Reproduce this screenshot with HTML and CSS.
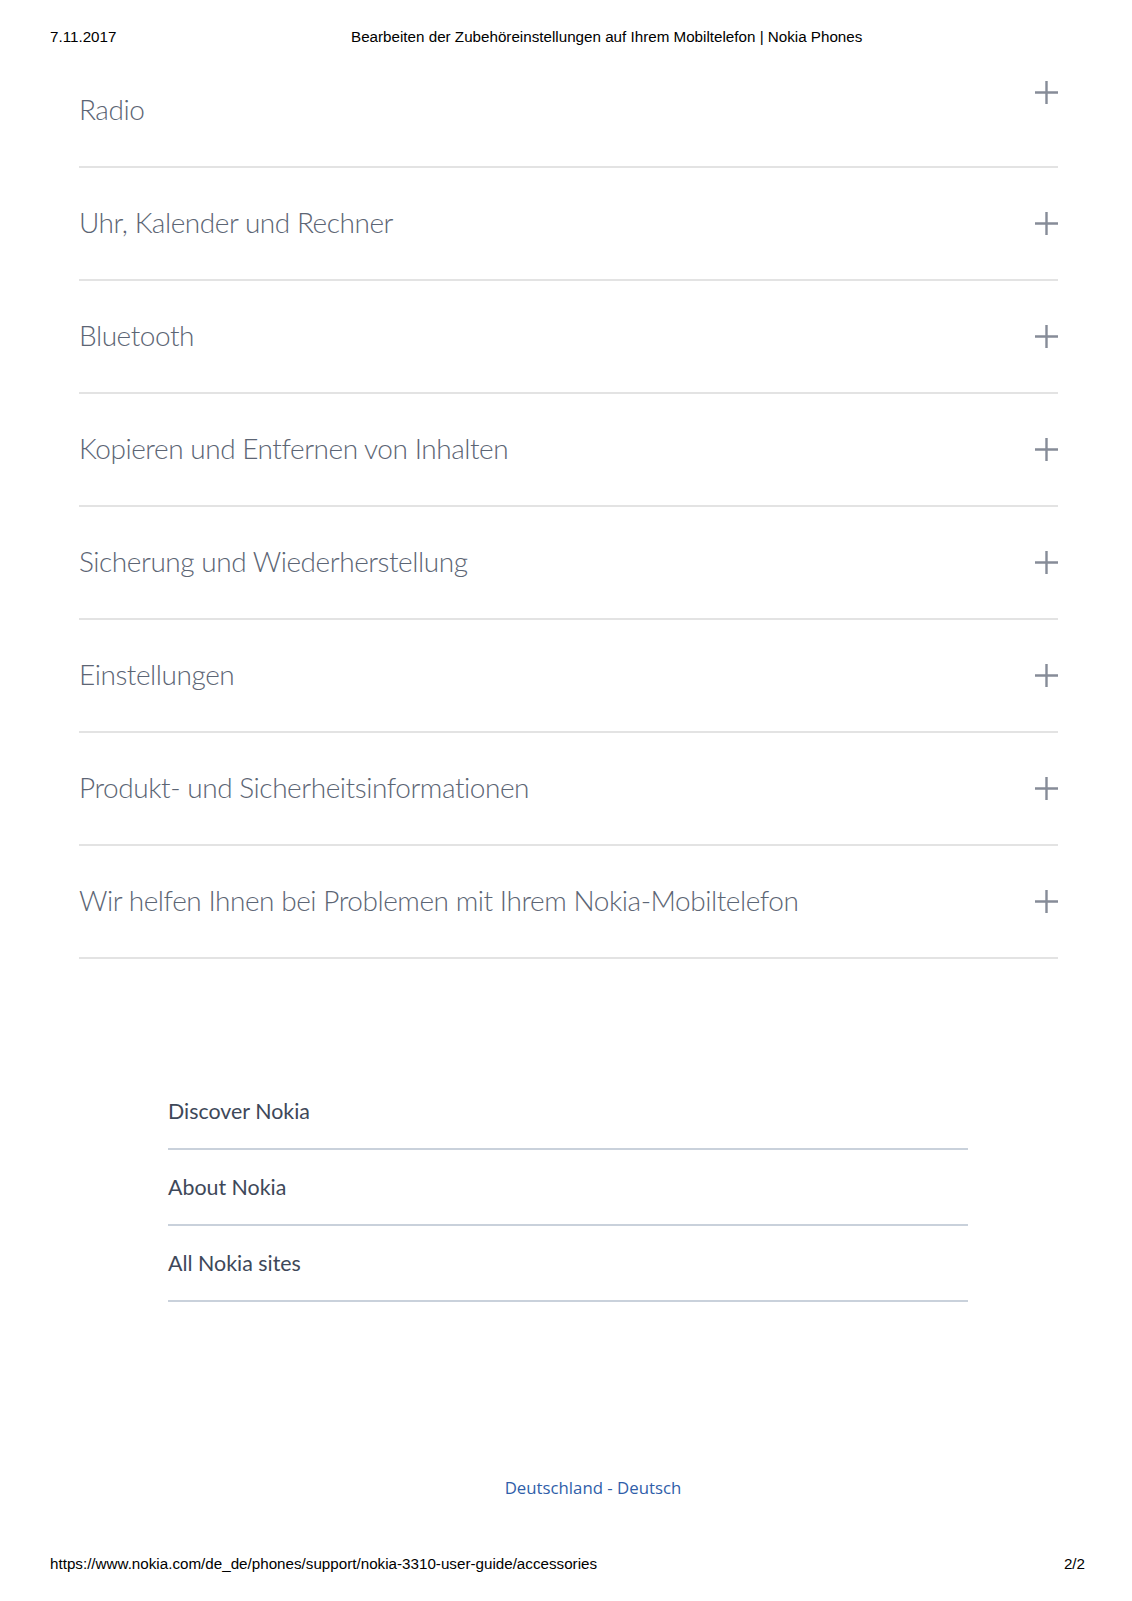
FILE: index.html
```html
<!DOCTYPE html>
<html lang="de">
<head>
<meta charset="utf-8">
<title>Bearbeiten der Zubehöreinstellungen auf Ihrem Mobiltelefon | Nokia Phones</title>
<link rel="stylesheet" href="styles.css">
</head>
<body>
<div class="page">
  <header class="print-head">
    <span class="print-date">7.11.2017</span>
    <span class="print-title">Bearbeiten der Zubehöreinstellungen auf Ihrem Mobiltelefon | Nokia Phones</span>
  </header>

  <main class="accordion">
    <div class="acc-row acc-row-first">
      <span class="acc-label">Radio</span>
      <svg class="plus" viewBox="0 0 23 23"><path d="M11.5 0V23M0 11.5H23"/></svg>
    </div>
    <div class="acc-row">
      <span class="acc-label">Uhr, Kalender und Rechner</span>
      <svg class="plus" viewBox="0 0 23 23"><path d="M11.5 0V23M0 11.5H23"/></svg>
    </div>
    <div class="acc-row">
      <span class="acc-label">Bluetooth</span>
      <svg class="plus" viewBox="0 0 23 23"><path d="M11.5 0V23M0 11.5H23"/></svg>
    </div>
    <div class="acc-row">
      <span class="acc-label">Kopieren und Entfernen von Inhalten</span>
      <svg class="plus" viewBox="0 0 23 23"><path d="M11.5 0V23M0 11.5H23"/></svg>
    </div>
    <div class="acc-row">
      <span class="acc-label">Sicherung und Wiederherstellung</span>
      <svg class="plus" viewBox="0 0 23 23"><path d="M11.5 0V23M0 11.5H23"/></svg>
    </div>
    <div class="acc-row">
      <span class="acc-label">Einstellungen</span>
      <svg class="plus" viewBox="0 0 23 23"><path d="M11.5 0V23M0 11.5H23"/></svg>
    </div>
    <div class="acc-row">
      <span class="acc-label">Produkt- und Sicherheitsinformationen</span>
      <svg class="plus" viewBox="0 0 23 23"><path d="M11.5 0V23M0 11.5H23"/></svg>
    </div>
    <div class="acc-row">
      <span class="acc-label">Wir helfen Ihnen bei Problemen mit Ihrem Nokia-Mobiltelefon</span>
      <svg class="plus" viewBox="0 0 23 23"><path d="M11.5 0V23M0 11.5H23"/></svg>
    </div>
  </main>

  <nav class="site-links">
    <a class="site-link">Discover Nokia</a>
    <a class="site-link">About Nokia</a>
    <a class="site-link">All Nokia sites</a>
  </nav>

  <div class="locale"><a class="locale-link">Deutschland - Deutsch</a></div>

  <footer class="print-foot">
    <span>https://www.nokia.com/de_de/phones/support/nokia-3310-user-guide/accessories</span>
    <span>2/2</span>
  </footer>
</div>
</body>
</html>
```

FILE: styles.css
```css
html, body {
  margin: 0;
  padding: 0;
  background: #ffffff;
}

.page {
  width: 1132px;
  height: 1601px;
  display: flex;
  flex-direction: column;
  overflow: hidden;
}

.print-head {
  display: flex;
  height: 55px;
  box-sizing: border-box;
  padding: 28px 0 0 50px;
  font-family: "Liberation Sans", Arial, sans-serif;
  font-size: 15.2px;
  line-height: 18px;
  color: #000;
}

.print-date {
  width: 301px;
  flex: none;
}

.accordion {
  margin: 0 74px 0 79px;
}

.acc-row {
  height: 111px;
  display: flex;
  align-items: center;
  justify-content: space-between;
  border-bottom: 2px solid #e3e3e3;
}

.acc-label {
  font-family: "Lato", "Open Sans", sans-serif;
  font-weight: 300;
  font-size: 28px;
  line-height: 34px;
  padding-bottom: 3px;
  color: #5c6574;
  letter-spacing: -0.45px;
}

.plus {
  width: 23px;
  height: 23px;
  flex: none;
  stroke: #868c98;
  stroke-width: 2.4;
  fill: none;
}

.acc-row-first .plus {
  align-self: flex-start;
  margin-top: 26px;
}

.site-links {
  margin: 115px 0 0 168px;
  width: 800px;
  display: flex;
  flex-direction: column;
}

.site-link {
  height: 74px;
  display: flex;
  align-items: center;
  border-bottom: 2px solid #c9d1db;
  font-family: "Lato", "Open Sans", sans-serif;
  font-size: 21.4px;
  color: #3e4859;
}

.locale {
  margin-top: 174px;
  padding-left: 54px;
  text-align: center;
  line-height: 24px;
}

.locale-link {
  font-family: "Open Sans", "Lato", sans-serif;
  font-size: 16.8px;
  color: #2f5ea9;
}

.print-foot {
  margin-top: 54px;
  display: flex;
  justify-content: space-between;
  padding: 0 47px 0 50px;
  font-family: "Liberation Sans", Arial, sans-serif;
  font-size: 15.2px;
  line-height: 18px;
  color: #000;
}
```
